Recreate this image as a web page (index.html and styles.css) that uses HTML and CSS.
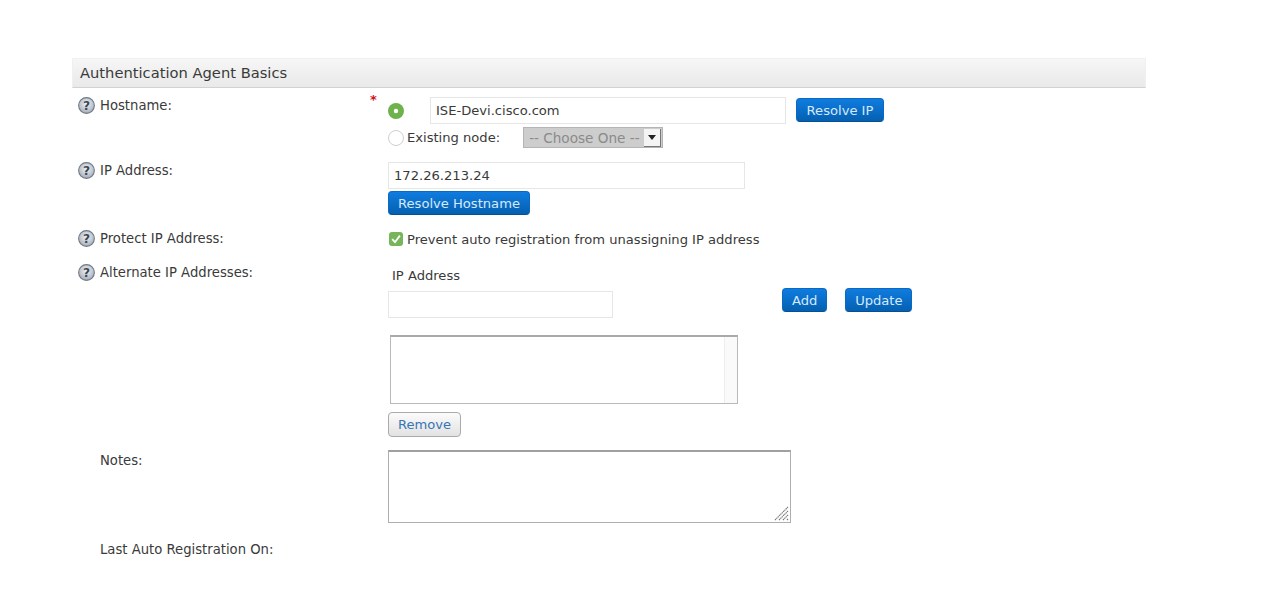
FILE: index.html
```html
<!DOCTYPE html>
<html lang="en">
<head>
<meta charset="utf-8">
<title>Authentication Agent Basics</title>
<link rel="stylesheet" href="styles.css">
</head>
<body>
<section class="panel">
  <h2 class="panel-title">Authentication Agent Basics</h2>

  <div class="row row-host">
    <div class="label">
      <svg class="help" viewBox="0 0 16 16"><defs><radialGradient id="hg" cx="50%" cy="40%" r="60%"><stop offset="0" stop-color="#f2f5f8"/><stop offset="1" stop-color="#a3adb9"/></radialGradient></defs><circle cx="8" cy="8" r="7.4" fill="url(#hg)" stroke="#6f7884" stroke-width="1"/><text x="8" y="12.2" text-anchor="middle" class="help-mark">?</text></svg>
      <span>Hostname:</span>
      <span class="req">*</span>
    </div>
    <div class="field">
      <div class="line line-host">
        <svg class="radio" viewBox="0 0 16 16"><circle cx="8" cy="8" r="8" fill="#6db24a"/><circle cx="8" cy="8" r="2.2" fill="#fff"/></svg>
        <input class="text text-host" type="text" value="ISE-Devi.cisco.com">
        <button class="btn btn-resolve-ip" type="button">Resolve IP</button>
      </div>
      <div class="line line-node">
        <svg class="radio" viewBox="0 0 16 16"><circle cx="8" cy="8" r="7.5" fill="#fff" stroke="#cfcfcf"/></svg>
        <span class="node-label">Existing node:</span>
        <div class="select"><span class="select-text">-- Choose One --</span><span class="select-arrow"></span></div>
      </div>
    </div>
  </div>

  <div class="row row-ip">
    <div class="label">
      <svg class="help" viewBox="0 0 16 16"><circle cx="8" cy="8" r="7.4" fill="url(#hg)" stroke="#6f7884" stroke-width="1"/><text x="8" y="12.2" text-anchor="middle" class="help-mark">?</text></svg>
      <span>IP Address:</span>
    </div>
    <div class="field">
      <input class="text text-ip" type="text" value="172.26.213.24">
      <button class="btn btn-hostname" type="button">Resolve Hostname</button>
    </div>
  </div>

  <div class="row row-protect">
    <div class="label">
      <svg class="help" viewBox="0 0 16 16"><circle cx="8" cy="8" r="7.4" fill="url(#hg)" stroke="#6f7884" stroke-width="1"/><text x="8" y="12.2" text-anchor="middle" class="help-mark">?</text></svg>
      <span>Protect IP Address:</span>
    </div>
    <div class="field check-line">
      <svg class="check" viewBox="0 0 14 14"><rect width="14" height="14" rx="3" fill="#76b55a"/><path d="M3.2 7.2 6 10.2 10.9 3.6" fill="none" stroke="#fff" stroke-width="1.8"/></svg>
      <span>Prevent auto registration from unassigning IP address</span>
    </div>
  </div>

  <div class="row row-alt">
    <div class="label">
      <svg class="help" viewBox="0 0 16 16"><circle cx="8" cy="8" r="7.4" fill="url(#hg)" stroke="#6f7884" stroke-width="1"/><text x="8" y="12.2" text-anchor="middle" class="help-mark">?</text></svg>
      <span>Alternate IP Addresses:</span>
    </div>
    <div class="field">
      <div class="alt-head">IP Address</div>
      <div class="alt-line">
        <input class="text text-alt" type="text">
        <button class="btn btn-add" type="button">Add</button>
        <button class="btn btn-update" type="button">Update</button>
      </div>
      <div class="listbox"><div class="listbox-track"></div></div>
      <button class="btn-plain" type="button">Remove</button>
    </div>
  </div>

  <div class="row row-notes">
    <div class="label label-plain"><span>Notes:</span></div>
    <div class="field">
      <div class="notes">
        <svg class="grip" viewBox="0 0 15 15"><path d="M1 14 14 1M5 14 14 5M9 14 14 9M13 14 14 13" stroke="#777" stroke-width="1.1" stroke-dasharray="1.4 .5" fill="none"/></svg>
      </div>
    </div>
  </div>

  <div class="row row-last">
    <div class="label label-plain"><span>Last Auto Registration On:</span></div>
  </div>
</section>
</body>
</html>
```
FILE: styles.css
```css
* { box-sizing: border-box; }
html, body { margin: 0; padding: 0; background: #fff; }
body {
  font-family: "DejaVu Sans", Verdana, sans-serif;
  font-size: 13.1px;
  color: #3a3a3a;
  overflow: hidden;
  height: 597px;
  padding-top: 58px;
}
.panel { margin-left: 72px; width: 1074px; }
.panel-title {
  margin: 0;
  height: 30px;
  padding-left: 7px;
  font-size: 14.7px;
  font-weight: 400;
  line-height: 27px;
  color: #3a3a3a;
  background: linear-gradient(#f6f6f6, #e9e9e9);
  border: 1px solid #f0f0f0;
  border-bottom: 1px solid #d2d2d2;
}
.row { display: flex; align-items: flex-start; }
.label {
  position: relative;
  flex: 0 0 316px;
  display: flex;
  align-items: center;
  gap: 6px;
  padding-left: 6px;
  height: 17px;
  line-height: 17px;
  font-size: 13.2px;
  white-space: nowrap;
}
.label-plain { padding-left: 28px; }
.help { width: 17px; height: 17px; flex: none; margin-right: -1px; }
.help-mark { font: 700 11.5px "DejaVu Sans", sans-serif; fill: #3e4650; }
.req {
  position: absolute;
  left: 298px;
  top: -6px;
  color: #d0131b;
  font-size: 13px;
  font-weight: 700;
}
.field { flex: 1; min-width: 0; }
.text {
  display: block;
  height: 27px;
  padding: 0 5px;
  font: 13.1px "DejaVu Sans", sans-serif;
  color: #3a3a3a;
  background: #fff;
  border: 1px solid #e6e6e6;
  outline: 0;
}
.btn {
  display: block;
  height: 24px;
  padding: 0 9px;
  font: 13.1px "DejaVu Sans", sans-serif;
  color: #d6e9fb;
  white-space: nowrap;
  background: linear-gradient(#0f7ce0, #0560b0);
  border: 1px solid #0a6ac2;
  border-bottom-color: #054f94;
  border-radius: 4px;
}

.row-host { margin-top: 9px; height: 65px; }
.line { display: flex; align-items: center; }
.line-host { height: 27px; }
.radio { width: 16px; height: 16px; flex: none; }
.text-host { width: 356px; margin-left: 26px; }
.btn-resolve-ip { width: 88px; margin: 0 0 1px 10px; }
.line-node { margin-top: 2px; height: 23px; }
.node-label { margin-left: 3px; }
.select {
  display: flex;
  align-items: center;
  justify-content: space-between;
  width: 140px;
  height: 21px;
  margin-left: 23px;
  padding: 0 1px 0 5px;
  font-size: 13.6px;
  color: #8a8a8a;
  background: #cdcdcd;
  border: 1px solid #b4b4b4;
}
.select-text { white-space: nowrap; }
.select-arrow {
  position: relative;
  width: 17px;
  height: 18px;
  background: #f4f4f4;
  border-right: 1px solid #777;
  border-bottom: 1px solid #777;
}
.select-arrow::after {
  content: "";
  position: absolute;
  left: 4px;
  top: 6px;
  border: 4px solid transparent;
  border-top: 5px solid #222;
  border-bottom: 0;
}

.row-ip { height: 68px; }
.text-ip { width: 357px; }
.btn-hostname { margin-top: 2px; }

.row-protect { height: 34px; }
.check-line { display: flex; align-items: center; height: 18px; }
.check { width: 14px; height: 14px; flex: none; margin: 0 4px 0 1px; }

.row-alt { height: 187px; }
.alt-head { height: 27px; padding: 3px 0 0 4px; line-height: 17px; white-space: nowrap; }
.alt-line { display: flex; align-items: flex-start; }
.text-alt { width: 225px; height: 27px; }
.btn-add { margin: -3px 0 0 169px; }
.btn-update { width: 67px; padding: 0; margin: -3px 0 0 18px; }
.listbox {
  display: flex;
  justify-content: flex-end;
  width: 348px;
  height: 69px;
  margin: 17px 0 0 2px;
  background: #fff;
  border: 1px solid #b9b9b9;
  border-top: 2px solid #a9a9a9;
}
.listbox-track { width: 13px; background: #fafafa; border-left: 1px solid #eee; }
.btn-plain {
  display: block;
  height: 25px;
  margin-top: 8px;
  padding: 0 9px;
  font: 13.1px "DejaVu Sans", sans-serif;
  color: #3775b5;
  background: linear-gradient(#fbfbfb, #e2e2e2);
  border: 1px solid #aaa;
  border-radius: 4px;
}

.row-notes { height: 88px; margin-top: -1px; }
.row-notes .label { margin-top: 2px; }
.notes {
  position: relative;
  width: 403px;
  height: 73px;
  background: #fff;
  border: 1px solid #aeaeae;
  border-top-width: 2px;
  border-top-color: #a0a0a0;
}
.grip { position: absolute; right: 1px; bottom: 1px; width: 15px; height: 15px; }
.row-last .label { margin-top: 3px; }
```
